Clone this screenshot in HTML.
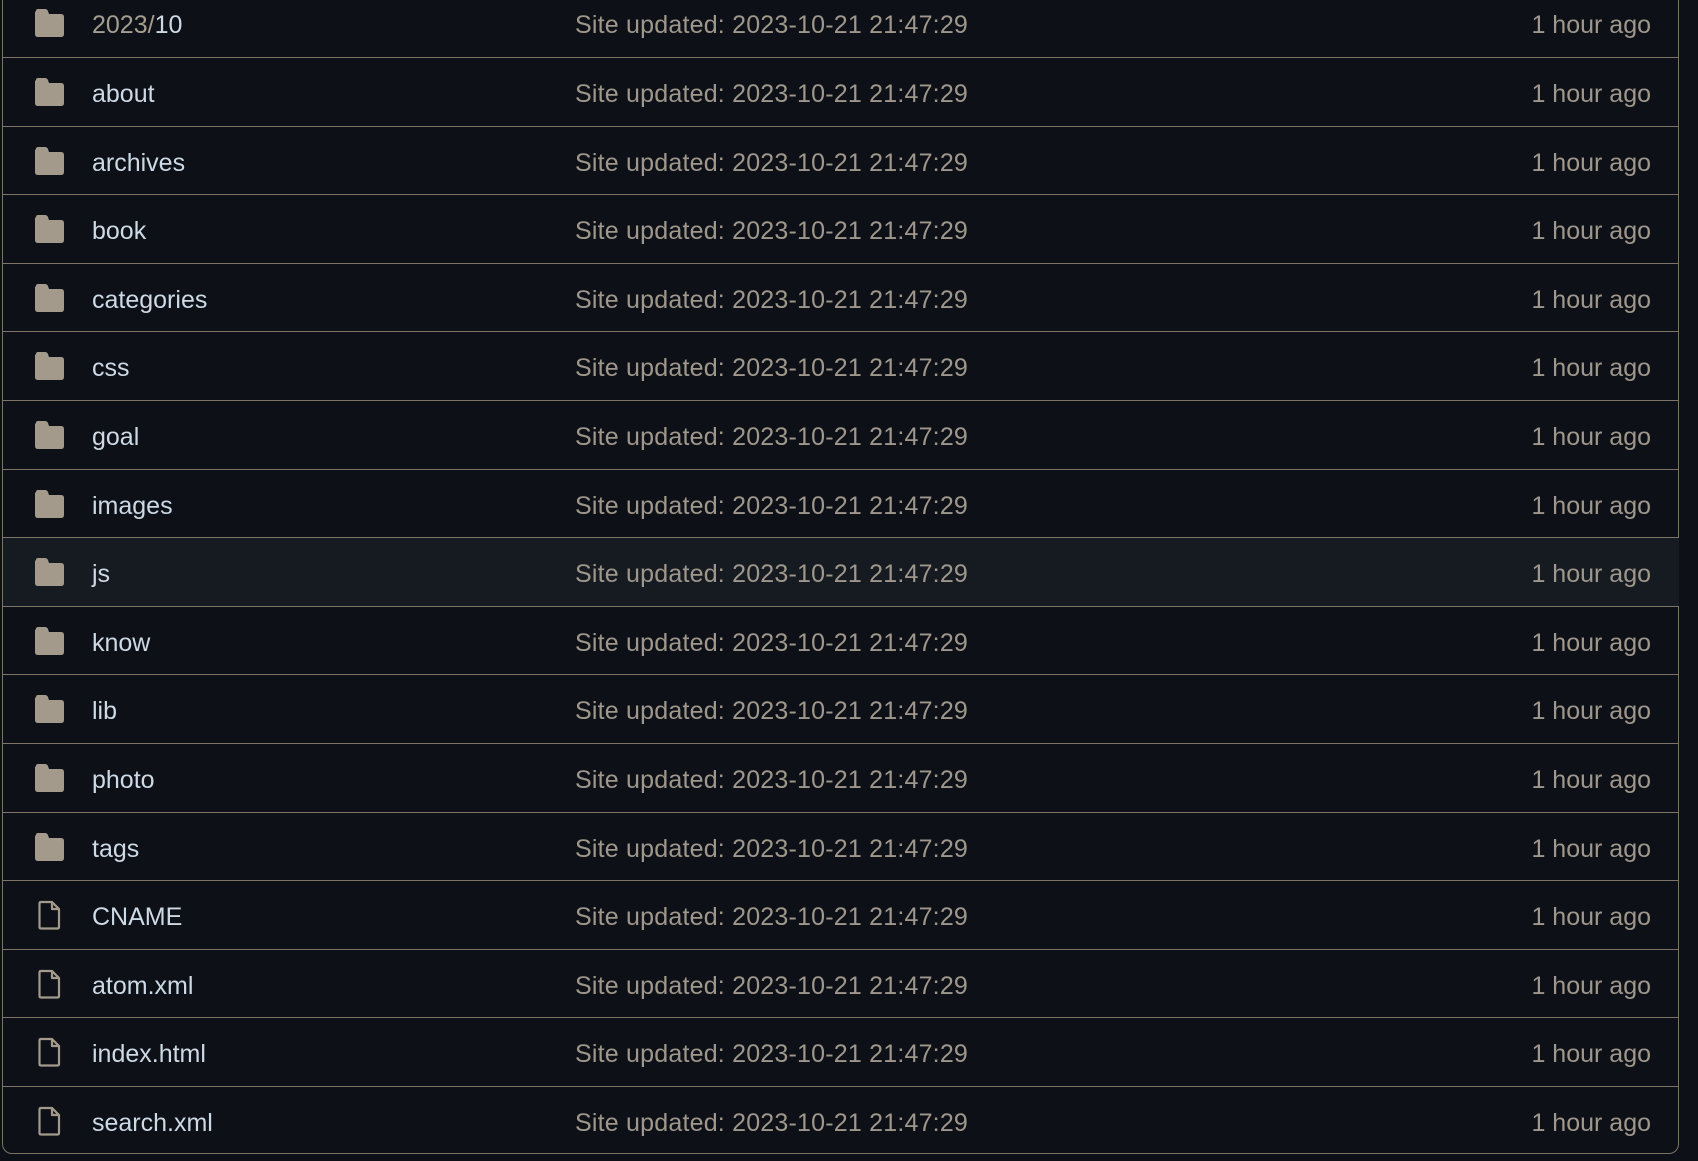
<!DOCTYPE html>
<html><head><meta charset="utf-8"><style>
html,body{margin:0;padding:0;background:#0d1117;width:1698px;height:1161px;overflow:hidden;position:relative;}
.box{position:absolute;left:2px;top:-20px;width:1677px;height:1174px;border:1px solid #7d7466;border-top:none;border-radius:0 0 10px 10px;box-sizing:border-box;}
.row{position:absolute;left:3px;width:1676px;height:68px;border-top:1px solid #7d7466;font-family:"Liberation Sans",sans-serif;font-size:25px;}
.row.first{border-top:none;}
.row.hl{background:#161b22;}
.ic{position:absolute;left:30px;top:19px;width:32px;height:30px;}
.nm{position:absolute;left:89px;top:22px;line-height:28px;color:#cdd9e5;}
.nm .m{color:#a59d90;}
.msg{position:absolute;left:572px;top:22px;line-height:28px;color:#9f978b;letter-spacing:0.2px;}
.t{position:absolute;right:28px;top:22px;line-height:28px;color:#9f978b;}
.r0{top:-11px}.r1{top:57px}.r2{top:126px}.r3{top:194px}.r4{top:263px}.r5{top:331px}.r6{top:400px}.r7{top:469px}.r8{top:537px}.r9{top:606px}.r10{top:674px}.r11{top:743px}.r12{top:812px}.r13{top:880px}.r14{top:949px}.r15{top:1017px}.r16{top:1086px}
</style></head><body>
<div class="box"></div>
<svg width="0" height="0" style="position:absolute"><defs>
<symbol id="fd" viewBox="0 0 32 30"><path d="M3 3 Q3 1 5 1 H12 Q14 1 15 3 L16 6 H28 Q31 6 31 9 V26 Q31 29 28 29 H5 Q2 29 2 26 V4 Z" fill="#a39a8b"/></symbol>
<symbol id="fl" viewBox="0 0 32 30"><path d="M8 2 H19 L26 9 V27 Q26 28.5 24.5 28.5 H8 Q6.5 28.5 6.5 27 V3.5 Q6.5 2 8 2 Z M19 2 V9 H26" fill="none" stroke="#a39a8b" stroke-width="2.2" stroke-linejoin="round"/></symbol>
</defs></svg>
<div class="row first r0"><svg class="ic"><use href="#fd"/></svg><span class="nm"><span class="m">2023/</span>10</span><span class="msg">Site updated: 2023-10-21 21:47:29</span><span class="t">1 hour ago</span></div>
<div class="row r1"><svg class="ic"><use href="#fd"/></svg><span class="nm">about</span><span class="msg">Site updated: 2023-10-21 21:47:29</span><span class="t">1 hour ago</span></div>
<div class="row r2"><svg class="ic"><use href="#fd"/></svg><span class="nm">archives</span><span class="msg">Site updated: 2023-10-21 21:47:29</span><span class="t">1 hour ago</span></div>
<div class="row r3"><svg class="ic"><use href="#fd"/></svg><span class="nm">book</span><span class="msg">Site updated: 2023-10-21 21:47:29</span><span class="t">1 hour ago</span></div>
<div class="row r4"><svg class="ic"><use href="#fd"/></svg><span class="nm">categories</span><span class="msg">Site updated: 2023-10-21 21:47:29</span><span class="t">1 hour ago</span></div>
<div class="row r5"><svg class="ic"><use href="#fd"/></svg><span class="nm">css</span><span class="msg">Site updated: 2023-10-21 21:47:29</span><span class="t">1 hour ago</span></div>
<div class="row r6"><svg class="ic"><use href="#fd"/></svg><span class="nm">goal</span><span class="msg">Site updated: 2023-10-21 21:47:29</span><span class="t">1 hour ago</span></div>
<div class="row r7"><svg class="ic"><use href="#fd"/></svg><span class="nm">images</span><span class="msg">Site updated: 2023-10-21 21:47:29</span><span class="t">1 hour ago</span></div>
<div class="row hl r8"><svg class="ic"><use href="#fd"/></svg><span class="nm">js</span><span class="msg">Site updated: 2023-10-21 21:47:29</span><span class="t">1 hour ago</span></div>
<div class="row r9"><svg class="ic"><use href="#fd"/></svg><span class="nm">know</span><span class="msg">Site updated: 2023-10-21 21:47:29</span><span class="t">1 hour ago</span></div>
<div class="row r10"><svg class="ic"><use href="#fd"/></svg><span class="nm">lib</span><span class="msg">Site updated: 2023-10-21 21:47:29</span><span class="t">1 hour ago</span></div>
<div class="row r11"><svg class="ic"><use href="#fd"/></svg><span class="nm">photo</span><span class="msg">Site updated: 2023-10-21 21:47:29</span><span class="t">1 hour ago</span></div>
<div class="row r12"><svg class="ic"><use href="#fd"/></svg><span class="nm">tags</span><span class="msg">Site updated: 2023-10-21 21:47:29</span><span class="t">1 hour ago</span></div>
<div class="row r13"><svg class="ic"><use href="#fl"/></svg><span class="nm">CNAME</span><span class="msg">Site updated: 2023-10-21 21:47:29</span><span class="t">1 hour ago</span></div>
<div class="row r14"><svg class="ic"><use href="#fl"/></svg><span class="nm">atom.xml</span><span class="msg">Site updated: 2023-10-21 21:47:29</span><span class="t">1 hour ago</span></div>
<div class="row r15"><svg class="ic"><use href="#fl"/></svg><span class="nm">index.html</span><span class="msg">Site updated: 2023-10-21 21:47:29</span><span class="t">1 hour ago</span></div>
<div class="row r16"><svg class="ic"><use href="#fl"/></svg><span class="nm">search.xml</span><span class="msg">Site updated: 2023-10-21 21:47:29</span><span class="t">1 hour ago</span></div>
</body></html>
